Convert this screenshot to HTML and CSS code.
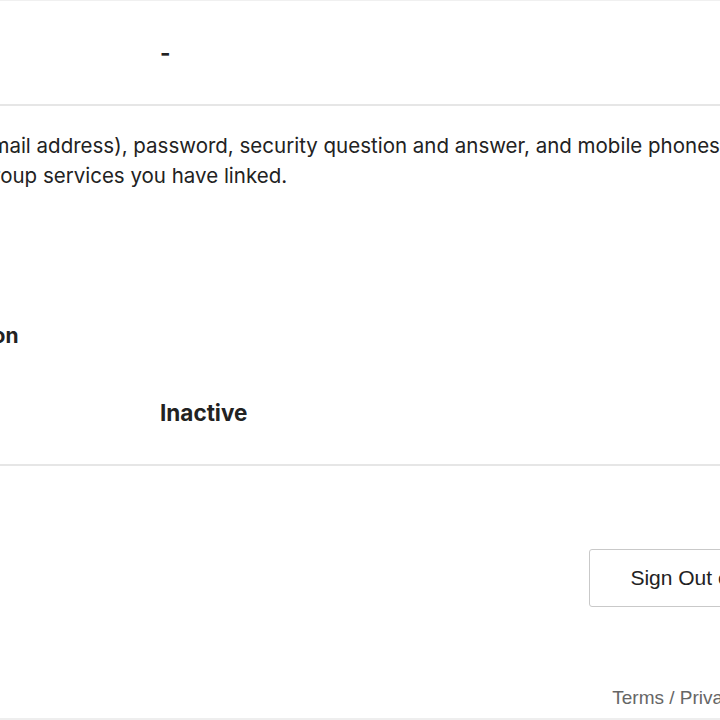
FILE: index.html
```html
<!DOCTYPE html>
<html lang="en">
  <head>
    <meta charset="UTF-8" />
    <meta name="viewport" content="width=device-width, initial-scale=1.0" />
    <title>Account Settings</title>
    <link rel="stylesheet" href="styles.css">
  </head>
  <body>
    <div class="page">
      <!-- Nickname row -->
      <div class="row row-first">
        <div class="row-label">Nickname</div>
        <div class="row-value strong">-</div>
      </div>

      <!-- What gets removed -->
      <p class="notice">
        Your account ID (email address), password, security question and answer, and mobile phones registered to it<br />
        and also all of its group services you have linked.
      </p>

      <h3 class="section-title">Two-Step Verification</h3>
      <div class="row">
        <div class="row-label">Status</div>
        <div class="row-value strong">Inactive</div>
      </div>

      <div class="actions">
        <button type="button" class="btn-outline">Sign Out of All Devices</button>
      </div>

      <div class="footer">Terms / Privacy Policy / Help</div>
    </div>
  </body>
</html>
```

FILE: styles.css
```css
html,
body {
  margin: 0;
  background: #fff;
}
body {
  width: 720px;
  overflow: hidden;
  font-family: Inter, "Noto Sans", sans-serif;
  color: #222;
}
.page {
  width: 1091px;
  margin-left: -206px;
}
.row {
  display: flex;
  align-items: center;
  height: 103px;
  border-bottom: 2px solid #e6e6e6;
  font-size: 21px;
}
.row-first {
  border-top: 1px solid #f0f0f0;
}
.row-label {
  width: 366px;
  flex-shrink: 0;
}
.row-value.strong {
  font-size: 22.5px;
  font-weight: 700;
}
.notice {
  margin: 25px 0 0;
  padding-left: 18px;
  font-size: 20.5px;
  line-height: 30px;
  white-space: nowrap;
}
.section-title {
  margin: 130px 0 10px;
  font-size: 21px;
  line-height: 30px;
  font-weight: 700;
}
.actions {
  display: flex;
  justify-content: flex-end;
  margin-top: 83px;
}
.btn-outline {
  height: 58px;
  padding: 0 40px;
  background: #fff;
  border: 1px solid #c9c9c9;
  border-radius: 3px;
  font-family: "Liberation Sans", Arial, sans-serif;
  font-size: 21px;
  color: #222;
}
.footer {
  margin-top: 76px;
  padding-bottom: 5px;
  border-bottom: 2px solid #eee;
  text-align: right;
  padding-right: 32px;
  font-family: "Liberation Sans", Arial, sans-serif;
  font-size: 19px;
  line-height: 30px;
  color: #666;
}
```
